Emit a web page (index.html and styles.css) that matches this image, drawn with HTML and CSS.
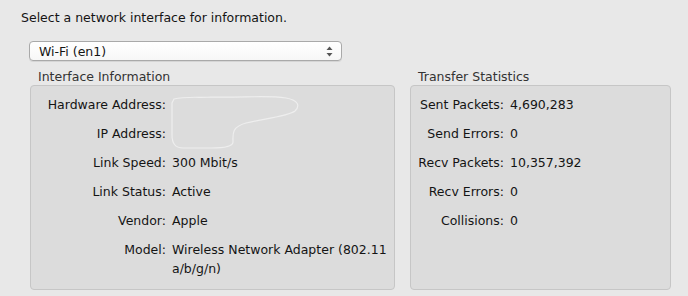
FILE: index.html
```html
<!DOCTYPE html>
<html lang="en">
<head>
    <meta charset="UTF-8">
    <title>Network Utility - Info</title>
    <link rel="stylesheet" href="styles.css">
</head>
<body>
    <div class="pane">
        <p class="intro">Select a network interface for information.</p>

        <div class="popup">
            <span>Wi-Fi (en1)</span>
            <svg class="popup-arrows" width="7" height="11" viewBox="0 0 7 11">
                <path d="M3.5 0.5 L6.5 4 L0.5 4 Z" fill="#555"/>
                <path d="M3.5 10.5 L6.5 7 L0.5 7 Z" fill="#555"/>
            </svg>
        </div>

        <div class="groups">
            <div class="group group-info">
                <div class="group-title">Interface Information</div>
                <div class="box">
                    <!-- scribbled-out addresses -->
                    <svg class="scribble" width="140" height="60" viewBox="0 0 140 60">
                        <path d="M3,3 C15,0 30,2 40,1 C70,2 95,-1 115,2 C126,4 130,9 124,15 C118,20 92,23 75,27 C60,31 62,39 62,46 C62,51 52,52 40,52 L12,52 C4,52 1,47 1,39 L1,7 Z"
                              fill="none" stroke="#eeeeee" stroke-width="1.2"/>
                    </svg>
                    <div class="rows">
                        <div class="label">Hardware Address:</div><div class="value"></div>
                        <div class="label">IP Address:</div><div class="value"></div>
                        <div class="label">Link Speed:</div><div class="value">300 Mbit/s</div>
                        <div class="label">Link Status:</div><div class="value">Active</div>
                        <div class="label">Vendor:</div><div class="value">Apple</div>
                        <div class="label">Model:</div><div class="value">Wireless Network Adapter (802.11<br>a/b/g/n)</div>
                    </div>
                </div>
            </div>

            <div class="group group-stats">
                <div class="group-title">Transfer Statistics</div>
                <div class="box">
                    <div class="rows">
                        <div class="label">Sent Packets:</div><div class="value">4,690,283</div>
                        <div class="label">Send Errors:</div><div class="value">0</div>
                        <div class="label">Recv Packets:</div><div class="value">10,357,392</div>
                        <div class="label">Recv Errors:</div><div class="value">0</div>
                        <div class="label">Collisions:</div><div class="value">0</div>
                    </div>
                </div>
            </div>
        </div>
    </div>
</body>
</html>
```

FILE: styles.css
```css
body {
    margin: 0;
    background-color: #e8e8e8;
    font-family: "DejaVu Sans", "Lucida Grande", sans-serif;
    font-size: 12.5px;
    color: #141414;
}
.pane {
    padding: 10px 0 0 21px;
    height: 286px;
    overflow: hidden;
}
.intro {
    margin: 0;
    line-height: 16px;
}
.popup {
    display: flex;
    align-items: center;
    justify-content: space-between;
    box-sizing: border-box;
    width: 313px;
    height: 20px;
    margin: 15px 0 0 8px;
    padding: 0 8px 0 9px;
    background: linear-gradient(#ffffff, #f7f7f7);
    border: 1px solid #a9a9a9;
    border-radius: 4px;
    box-shadow: 0 1px 0 rgba(0, 0, 0, 0.08);
}
.popup-arrows {
    display: block;
}
.groups {
    display: flex;
    gap: 15px;
    margin-left: 9px;
}
.group-title {
    color: #333;
    line-height: 15px;
    padding: 8px 0 0 8px;
}
.box {
    position: relative;
    box-sizing: border-box;
    height: 205px;
    margin-top: 1px;
    background-color: #dcdcdc;
    border: 1px solid #c6c6c6;
    border-radius: 4px;
    padding-top: 11px;
}
.group-info .box {
    width: 365px;
}
.group-stats .box {
    width: 261px;
}
.rows {
    display: grid;
    row-gap: 14px;
    column-gap: 6px;
    line-height: 15px;
}
.group-info .rows {
    grid-template-columns: 135px 1fr;
}
.group-stats .rows {
    grid-template-columns: 93px 1fr;
}
.label {
    text-align: right;
    white-space: nowrap;
}
.value {
    min-height: 19px;
    line-height: 19px;
    margin: -2px 0;
    white-space: nowrap;
}
.scribble {
    position: absolute;
    left: 140px;
    top: 10px;
}
```
